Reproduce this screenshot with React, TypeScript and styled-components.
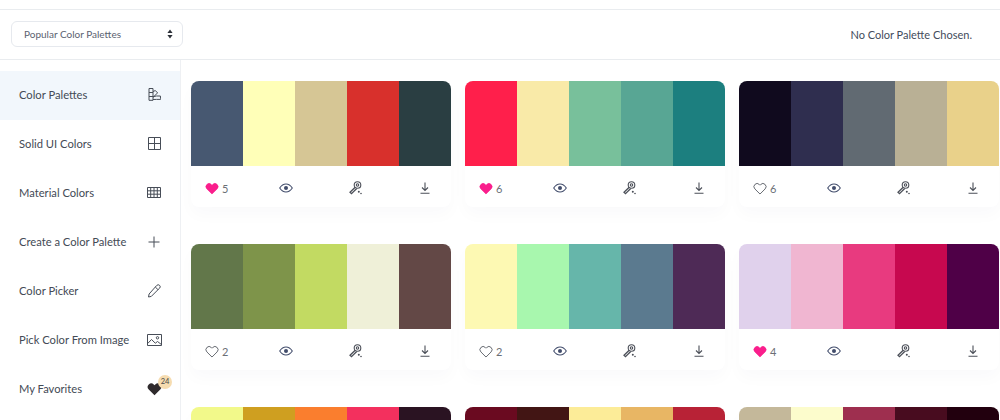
import React from "react";
import styled, { createGlobalStyle } from "styled-components";

const Global = createGlobalStyle`
  html, body { margin: 0; padding: 0; height: 420px; overflow: hidden; background: #fff; }
  body { font-family: "Lato", "Liberation Sans", sans-serif; color: #3d4450; }
  * { box-sizing: border-box; }
`;

const Page = styled.div`
  width: 1000px;
  height: 420px;
  overflow: hidden;
  padding-top: 9px;
  display: flex;
  flex-direction: column;
`;

const Header = styled.header`
  height: 51px;
  flex: none;
  border-top: 1px solid #e9ecef;
  border-bottom: 1px solid #e9ecef;
  display: flex;
  align-items: center;
  justify-content: space-between;
  padding: 0 28px 1px 11px;
`;

const SelectBox = styled.div`
  width: 172px;
  height: 26px;
  border: 1px solid #e6e9ee;
  border-radius: 6px;
  display: flex;
  align-items: center;
  justify-content: space-between;
  padding: 0 9px 0 12px;
  font-size: 10px;
  color: #5a6270;
`;

const Chosen = styled.div`
  font-size: 11px;
  color: #434b5c;
`;

const Body = styled.div`
  flex: 1;
  display: flex;
  min-height: 0;
`;

const Sidebar = styled.nav`
  width: 181px;
  flex: none;
  padding-top: 11px;
  border-right: 1px solid #eef0f3;
`;

const NavRow = styled.div<{ $active?: boolean }>`
  height: 49px;
  display: flex;
  align-items: center;
  justify-content: space-between;
  padding: 0 18px 2px 19px;
  font-size: 11.2px;
  color: #434a55;
  background: ${(p) => (p.$active ? "#f2f7fc" : "transparent")};
`;

const IconSlot = styled.span`
  position: relative;
  width: 16px;
  height: 16px;
  display: flex;
  align-items: center;
  justify-content: center;
  color: #474d57;
`;

const Badge = styled.span`
  position: absolute;
  top: -6px;
  right: -10px;
  width: 14px;
  height: 14px;
  border-radius: 50%;
  background: #f6dcb0;
  color: #4c4c4c;
  font-size: 7.5px;
  display: flex;
  align-items: center;
  justify-content: center;
`;

const Grid = styled.main`
  flex: 1;
  padding: 21px 0 0 10px;
  display: grid;
  grid-template-columns: repeat(3, 260px);
  column-gap: 14px;
  row-gap: 37px;
  align-content: start;
`;

const Card = styled.article`
  border-radius: 8px;
  background: #fff;
  box-shadow: 0 8px 16px rgba(40, 50, 70, 0.025);
`;

const Swatches = styled.div`
  height: 85px;
  display: flex;
  border-radius: 8px 8px 0 0;
  overflow: hidden;
`;

const Swatch = styled.div<{ $c: string }>`
  flex: 1;
  background: ${(p) => p.$c};
`;

const Actions = styled.div`
  height: 41px;
  display: grid;
  grid-template-columns: 74px 70px 71px 33px;
  align-items: center;
  padding: 3px 0 0 14px;
`;

const Likes = styled.div`
  display: flex;
  align-items: center;
  gap: 3px;
  font-size: 11px;
  color: #6b6f76;
`;

const ActionIcon = styled.span`
  display: flex;
  align-items: center;
  color: #414c6b;
`;

const GreyIcon = styled(ActionIcon)`
  color: #4b4f58;
`;

const Heart = ({ filled }: { filled: boolean }) => (
  <svg width="14" height="13" viewBox="0 0 24 22" fill={filled ? "#fa1e8c" : "none"} stroke={filled ? "#fa1e8c" : "#5d6168"} strokeWidth={filled ? 1 : 1.6} strokeLinejoin="round">
    <path d="M12 20.5 3.2 11.7a5.4 5.4 0 0 1 0-7.6 5.3 5.3 0 0 1 7.6 0L12 5.3l1.2-1.2a5.3 5.3 0 0 1 7.6 0 5.4 5.4 0 0 1 0 7.6Z" />
  </svg>
);

const Eye = () => (
  <svg width="14" height="10" viewBox="0 0 14 10" fill="none" stroke="currentColor" strokeWidth="1.1">
    <path d="M.7 5C2.4 2.4 4.5 1 7 1s4.6 1.4 6.3 4C11.6 7.6 9.500 9 7 9S2.400 7.600.7 5Z" />
    <circle cx="7" cy="5" r="2" fill="currentColor" stroke="none" />
  </svg>
);

const KeyPicker = () => (
  <svg width="13" height="14" viewBox="0 0 13 14" fill="none" stroke="currentColor" strokeWidth="1.1">
    <circle cx="8.500" cy="4" r="3.300" />
    <circle cx="8.500" cy="4" r="1.200" />
    <path d="M6.200 6.300 1 11.200l1.500 1.500L7.700 7.500" strokeWidth="1.300" />
    <circle cx="9.800" cy="10.800" r="1" fill="currentColor" stroke="none" />
    <circle cx="12" cy="12.500" r=".8" fill="currentColor" stroke="none" />
  </svg>
);

const Download = () => (
  <svg width="10" height="12" viewBox="0 0 10 12" fill="none" stroke="currentColor" strokeWidth="1.1">
    <path d="M5 .5v7.500M2 5.500 5 8.500l3-3M.5 11.300h9" />
  </svg>
);

const Updown = () => (
  <svg width="6" height="10" viewBox="0 0 6 10" fill="#2c3038">
    <path d="M3 .6 5.600 4H.4ZM3 9.400.4 6h5.200Z" />
  </svg>
);

const sw = { fill: "none", stroke: "currentColor", strokeWidth: 1 };

const navIcons: Record<string, React.ReactNode> = {
  palettes: (
    <svg width="13" height="13" viewBox="0 0 13 13" {...sw}>
      <path d="M1 .5h4v11.800H1ZM1 4.500h4M1 8.500h4M5 11.500l3.500-.1h4v-.9l-.1-2.500H8.500L5 8.700M5 3.500l2.200-.9 2.500 2.200-4.700 4.600" />
    </svg>
  ),
  solid: (
    <svg width="13" height="13" viewBox="0 0 13 13" {...sw}>
      <path d="M.5.500h12v12H.5ZM6.500.500v12M.5 6.500h12" />
    </svg>
  ),
  material: (
    <svg width="14" height="11" viewBox="0 0 14 11" {...sw}>
      <path d="M.5.500h13v10H.5ZM3.700.500v10M7 .5v10M10.300.500v10M.5 3.800h13M.5 7.200h13" />
    </svg>
  ),
  plus: (
    <svg width="12" height="12" viewBox="0 0 12 12" {...sw}>
      <path d="M6 .5v11M.5 6h11" />
    </svg>
  ),
  picker: (
    <svg width="14" height="14" viewBox="0 0 14 14" {...sw}>
      <path d="M8.300 3 11 5.700 4.300 12.400 1.500 13l.6-3Z" />
      <path d="M8.300 3 9.800 1.400a1.700 1.700 0 0 1 2.800 2.800L11 5.700" />
    </svg>
  ),
  image: (
    <svg width="15" height="12" viewBox="0 0 15 12" {...sw}>
      <path d="M.5.500h14v11H.5Z" />
      <path d="M.7 9.500 4.500 5.500l3.800 3.700 2.200-1.700 3.900 3" />
      <circle cx="10.500" cy="3.800" r="1.200" />
    </svg>
  ),
  favorites: (
    <svg width="15" height="14" viewBox="0 0 24 22" fill="#2f2a2c">
      <path d="M12 21 2.800 11.900a5.700 5.700 0 0 1 0-8 5.600 5.600 0 0 1 8 0L12 5.100l1.200-1.200a5.600 5.600 0 0 1 8 0 5.700 5.700 0 0 1 0 8Z" />
    </svg>
  ),
};

const navItems = [
  { label: "Color Palettes", icon: "palettes", active: true },
  { label: "Solid UI Colors", icon: "solid" },
  { label: "Material Colors", icon: "material" },
  { label: "Create a Color Palette", icon: "plus" },
  { label: "Color Picker", icon: "picker" },
  { label: "Pick Color From Image", icon: "image" },
  { label: "My Favorites", icon: "favorites", badge: "24" },
];

type Palette = { colors: string[]; likes?: number; liked?: boolean };

const palettes: Palette[] = [
  { colors: ["#475871", "#ffffb8", "#d6c695", "#d8302c", "#2a3e42"], likes: 5, liked: true },
  { colors: ["#ff1f4b", "#f9eaa8", "#78c09b", "#58a694", "#1c7f7f"], likes: 6, liked: true },
  { colors: ["#100a1e", "#2f2e4f", "#616a72", "#b9b095", "#e9d18a"], likes: 6, liked: false },
  { colors: ["#62774a", "#7e944a", "#c2da62", "#eff0d8", "#634846"], likes: 2, liked: false },
  { colors: ["#fdf9b3", "#a8f7ae", "#66b6aa", "#5b7a8f", "#4e2a56"], likes: 2, liked: false },
  { colors: ["#e0d1ec", "#f0b6d1", "#e83a7f", "#c7084f", "#4f0047"], likes: 4, liked: true },
  { colors: ["#f2f98a", "#cf9f20", "#fa7e2e", "#f3305e", "#2a1322"] },
  { colors: ["#6a0a20", "#421514", "#fcec98", "#e8b664", "#b82236"] },
  { colors: ["#c4b89a", "#fcfccc", "#9e2f4f", "#480c1f", "#22000e"] },
];

export default function App() {
  return (
    <Page>
      <Global />
      <Header>
        <SelectBox>
          Popular Color Palettes
          <Updown />
        </SelectBox>
        <Chosen>No Color Palette Chosen.</Chosen>
      </Header>
      <Body>
        <Sidebar>
          {navItems.map((n) => (
            <NavRow key={n.label} $active={n.active}>
              {n.label}
              <IconSlot>
                {navIcons[n.icon]}
                {n.badge && <Badge>{n.badge}</Badge>}
              </IconSlot>
            </NavRow>
          ))}
        </Sidebar>
        <Grid>
          {palettes.map((p, i) => (
            <Card key={i}>
              <Swatches>
                {p.colors.map((c) => (
                  <Swatch key={c} $c={c} />
                ))}
              </Swatches>
              {p.likes !== undefined && (
                <Actions>
                  <Likes>
                    <Heart filled={!!p.liked} />
                    {p.likes}
                  </Likes>
                  <ActionIcon><Eye /></ActionIcon>
                  <GreyIcon><KeyPicker /></GreyIcon>
                  <GreyIcon><Download /></GreyIcon>
                </Actions>
              )}
            </Card>
          ))}
        </Grid>
      </Body>
    </Page>
  );
}
